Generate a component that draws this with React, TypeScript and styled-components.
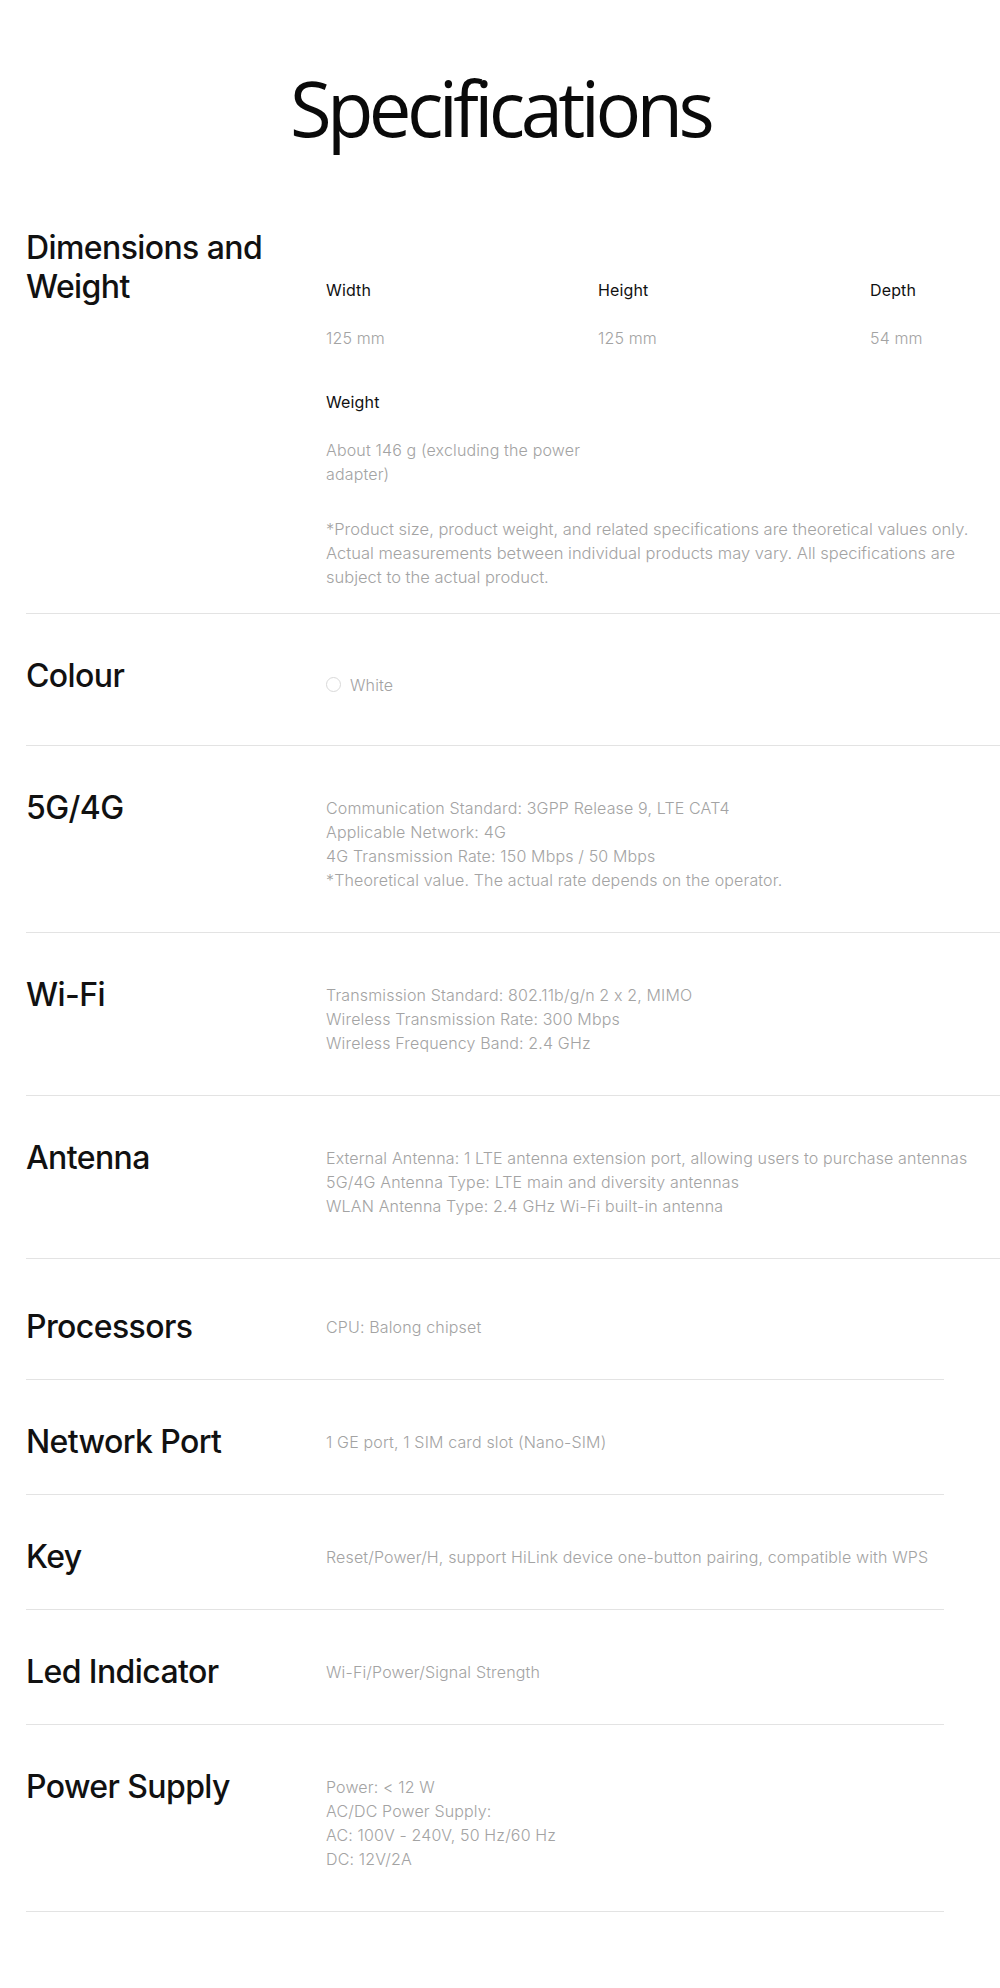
import React from 'react';
import styled, { createGlobalStyle } from 'styled-components';

const GlobalStyle = createGlobalStyle`
    html, body {
        margin: 0;
        padding: 0;
        background: #fff;
        overflow-x: hidden;
    }

    body {
        font-family: Inter, "Noto Sans", sans-serif;
        color: #111;
    }
`;

type SpecRow = {
    title: string;
    lines: string[];
};

const wideRows: SpecRow[] = [
    {
        title: '5G/4G',
        lines: [
            'Communication Standard: 3GPP Release 9, LTE CAT4',
            'Applicable Network: 4G',
            '4G Transmission Rate: 150 Mbps / 50 Mbps',
            '*Theoretical value. The actual rate depends on the operator.',
        ],
    },
    {
        title: 'Wi-Fi',
        lines: [
            'Transmission Standard: 802.11b/g/n 2 x 2, MIMO',
            'Wireless Transmission Rate: 300 Mbps',
            'Wireless Frequency Band: 2.4 GHz',
        ],
    },
    {
        title: 'Antenna',
        lines: [
            'External Antenna: 1 LTE antenna extension port, allowing users to purchase antennas',
            '5G/4G Antenna Type: LTE main and diversity antennas',
            'WLAN Antenna Type: 2.4 GHz Wi-Fi built-in antenna',
        ],
    },
];

const narrowRows: SpecRow[] = [
    { title: 'Processors', lines: ['CPU: Balong chipset'] },
    { title: 'Network Port', lines: ['1 GE port, 1 SIM card slot (Nano-SIM)'] },
    { title: 'Key', lines: ['Reset/Power/H, support HiLink device one-button pairing, compatible with WPS'] },
    { title: 'Led Indicator', lines: ['Wi-Fi/Power/Signal Strength'] },
    {
        title: 'Power Supply',
        lines: ['Power: < 12 W', 'AC/DC Power Supply:', 'AC: 100V - 240V, 50 Hz/60 Hz', 'DC: 12V/2A'],
    },
];

const dimensions = [
    { label: 'Width', value: '125 mm' },
    { label: 'Height', value: '125 mm' },
    { label: 'Depth', value: '54 mm' },
];

const Page = styled.main`
    padding: 62px 0 76px;
`;

const Title = styled.h1`
    margin: 0 0 82px;
    font-family: "Open Sans", "Noto Sans", sans-serif;
    font-size: 76px;
    line-height: 1.2;
    font-weight: 400;
    letter-spacing: -4.6px;
    text-align: center;
    color: #0a0a0a;
`;

const SpecList = styled.div`
    padding-left: 26px;
`;

const WideGroup = styled.div``;

const NarrowGroup = styled.div`
    margin-right: 56px;
    padding-top: 6px;
`;

const Section = styled.section<{ $first?: boolean; $tail?: number }>`
    display: grid;
    grid-template-columns: 300px 1fr;
    align-items: start;
    padding: ${(p) => (p.$first ? '0' : '49px')} 0 ${(p) => p.$tail ?? 40}px;
    border-bottom: 1px solid #e3e3e3;
`;

const Heading = styled.h2`
    margin: -6px 0 -8px;
    font-size: 32px;
    line-height: 1.2;
    font-weight: 500;
    letter-spacing: -0.6px;
    color: #111;
`;

const Body = styled.div<{ $offset?: number }>`
    margin-top: ${(p) => p.$offset ?? 1}px;
    min-width: 0;
`;

const Line = styled.p`
    margin: 0;
    font-size: 16px;
    line-height: 24px;
    font-weight: 300;
    letter-spacing: 0.15px;
    color: #a3a3a3;
    white-space: nowrap;
`;

const DimGrid = styled.div`
    display: grid;
    grid-template-columns: 272px 272px 1fr;
    row-gap: 40px;
`;

const DimCell = styled.div`
    display: flex;
    flex-direction: column;
    gap: 24px;
`;

const DimLabel = styled.span`
    font-size: 16px;
    line-height: 24px;
    font-weight: 400;
    letter-spacing: 0.15px;
    color: #111;
`;

const DimValue = styled.span`
    font-size: 16px;
    line-height: 24px;
    font-weight: 300;
    letter-spacing: 0.15px;
    color: #a3a3a3;
`;

const Note = styled.p`
    margin: 31px 0 0;
    max-width: 662px;
    font-size: 16.5px;
    line-height: 24px;
    font-weight: 300;
    color: #a3a3a3;
`;

const Swatch = styled.div`
    display: flex;
    align-items: center;
    gap: 9px;
    height: 41px;
    font-size: 16px;
    font-weight: 300;
    letter-spacing: 0.15px;
    color: #a3a3a3;
`;

const SwatchDot = styled.span`
    width: 13px;
    height: 13px;
    border-radius: 50%;
    border: 1px solid #d9d9d9;
    background: #fff;
`;

const SpecSection = ({ row }: { row: SpecRow }) => (
    <Section>
        <Heading>{row.title}</Heading>
        <Body>
            {row.lines.map((l) => (
                <Line key={l}>{l}</Line>
            ))}
        </Body>
    </Section>
);

export default function App() {
    return (
        <>
            <GlobalStyle />
            <Page>
                <Title>Specifications</Title>

                <SpecList>
                    <WideGroup>
                        <Section $first $tail={24}>
                            <Heading>
                                Dimensions and
                                <br />
                                Weight
                            </Heading>
                            <Body $offset={43}>
                                <DimGrid>
                                    {dimensions.map((d) => (
                                        <DimCell key={d.label}>
                                            <DimLabel>{d.label}</DimLabel>
                                            <DimValue>{d.value}</DimValue>
                                        </DimCell>
                                    ))}
                                    <DimCell>
                                        <DimLabel>Weight</DimLabel>
                                        <DimValue>About 146 g (excluding the power adapter)</DimValue>
                                    </DimCell>
                                </DimGrid>
                                <Note>
                                    *Product size, product weight, and related specifications are theoretical values
                                    only. Actual measurements between individual products may vary. All specifications
                                    are subject to the actual product.
                                </Note>
                            </Body>
                        </Section>

                        <Section>
                            <Heading>Colour</Heading>
                            <Body>
                                <Swatch>
                                    <SwatchDot />
                                    White
                                </Swatch>
                            </Body>
                        </Section>

                        {wideRows.map((row) => (
                            <SpecSection key={row.title} row={row} />
                        ))}
                    </WideGroup>

                    <NarrowGroup>
                        {narrowRows.map((row) => (
                            <SpecSection key={row.title} row={row} />
                        ))}
                    </NarrowGroup>
                </SpecList>
            </Page>
        </>
    );
}
